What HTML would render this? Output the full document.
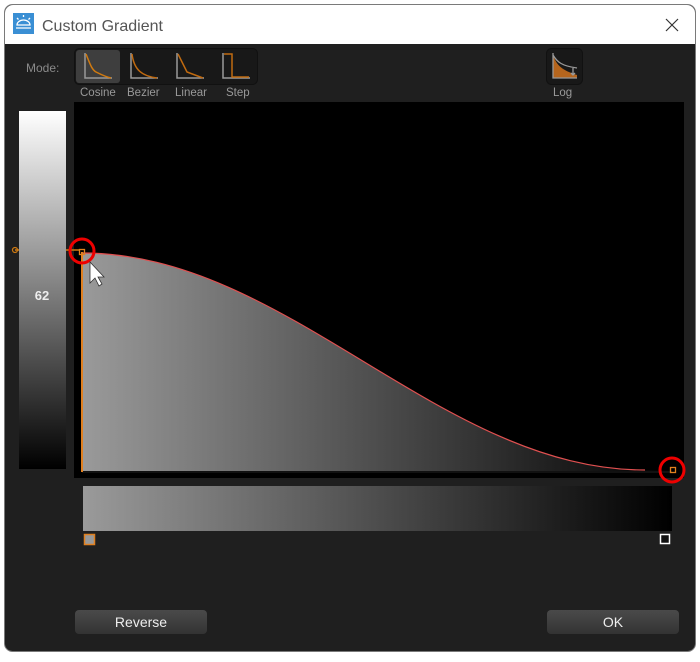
<!DOCTYPE html>
<html><head><style>
body{margin:0;background:#fff;width:700px;height:657px;overflow:hidden;font-family:"Liberation Sans",sans-serif}
</style></head><body>
<svg width="700" height="657" viewBox="0 0 700 657" xmlns="http://www.w3.org/2000/svg" font-family="Liberation Sans, sans-serif">
<defs>
<linearGradient id="h" x1="0" x2="1" y1="0" y2="0"><stop offset="0" stop-color="#9a9a9a"/><stop offset="1" stop-color="#000"/></linearGradient>
<linearGradient id="v" x1="0" x2="0" y1="0" y2="1"><stop offset="0" stop-color="#fff"/><stop offset="1" stop-color="#000"/></linearGradient>
<linearGradient id="btn" x1="0" x2="0" y1="0" y2="1"><stop offset="0" stop-color="#4a4a4a"/><stop offset="1" stop-color="#333"/></linearGradient>
</defs>
<rect x="4.5" y="4.5" width="691" height="647" rx="8" fill="#1f1f1f" stroke="#7a7a7a"/>
<path d="M5 44 V13 a8 8 0 0 1 8 -8 H687 a8 8 0 0 1 8 8 V44 Z" fill="#fff"/>
<rect x="13" y="13" width="21" height="21" fill="#3a8fd4"/>
<g stroke="#fff" stroke-width="1.3" fill="none"><path d="M17 25 a6.5 5 0 0 1 13 0 Z"/><path d="M23.5 15v2M17 18l1.5 1.5M30 18l-1.5 1.5M16 28h15"/></g>
<text x="42" y="31" font-size="16" fill="#555">Custom Gradient</text>
<path d="M666 19l12 12M678 19l-12 12" stroke="#333" stroke-width="1.2"/>
<text x="26" y="72" font-size="12" fill="#8a8a8a">Mode:</text>
<rect x="74.5" y="48.5" width="183" height="36" rx="5" fill="#181818" stroke="#111"/>
<rect x="76" y="50" width="44" height="33" rx="3" fill="#3e3e3e"/>
<g fill="none" stroke-width="1.5">
<path d="M85 53V78H112" stroke="#999"/><path d="M86 54 C90 64 92 70 96 72 C102 75 106 77 111 78" stroke="#d07a10"/>
<path d="M131 53V78H158" stroke="#999"/><path d="M132 54 C134 70 142 76 157 78" stroke="#c06a10"/>
<path d="M177 53V78H204" stroke="#999"/><path d="M178 54 L187 72 L203 78" stroke="#c06a10"/>
<path d="M223 53V78H250" stroke="#999"/><path d="M224 54 H232 V77 H249" stroke="#c06a10"/>
</g>
<text x="80" y="96" font-size="11.5" fill="#999">Cosine</text>
<text x="127" y="96" font-size="11.5" fill="#999">Bezier</text>
<text x="175" y="96" font-size="11.5" fill="#999">Linear</text>
<text x="226" y="96" font-size="11.5" fill="#999">Step</text>
<rect x="546.5" y="48.5" width="36" height="36" rx="5" fill="#181818" stroke="#111"/>
<path d="M553 55 C557 66 562 70 577 75 V78 H553 Z" fill="#b5651d"/>
<path d="M553 53V78H577M553 55 C557 62 562 66 577 68M573 68v7m-2 -2l2 2l2 -2" stroke="#999" fill="none" stroke-width="1.3"/>
<text x="553" y="96" font-size="11.5" fill="#999">Log</text>
<rect x="74" y="102" width="610" height="376" fill="#000"/>
<path d="M82 253 C287 253 440 470 645 470 H672 V471 H82 Z" fill="url(#h)"/>
<path d="M82 253 C287 253 440 470 645 470" fill="none" stroke="#e05050" stroke-width="1.2"/>
<rect x="82" y="471" width="590" height="2" fill="#111"/>
<line x1="82" y1="252" x2="82" y2="472" stroke="#e08020" stroke-width="2"/>
<line x1="15" y1="250" x2="80" y2="250" stroke="#d07a10" stroke-width="1.5"/>
<circle cx="15" cy="250" r="2.5" fill="none" stroke="#d07a10" stroke-width="1.2"/>
<rect x="19" y="111" width="47" height="358" fill="url(#v)"/>
<text x="42" y="300" font-size="13" font-weight="bold" fill="#eee" text-anchor="middle">62</text>
<rect x="79.5" y="249.5" width="5" height="5" fill="none" stroke="#e08020" stroke-width="1.3"/>
<circle cx="82" cy="251" r="12" fill="none" stroke="#e00" stroke-width="3"/>
<path d="M90 262 V283 L95 278 L99 286 L102 284 L98 277 L104 277 Z" fill="#fff" stroke="#333" stroke-width="0.8"/>
<rect x="670.5" y="467.5" width="5" height="5" fill="none" stroke="#e08020" stroke-width="1.3"/>
<circle cx="672" cy="470" r="12" fill="none" stroke="#e00" stroke-width="3"/>
<rect x="83" y="486" width="589" height="45" fill="url(#h)"/>
<rect x="84.5" y="534.5" width="10" height="10" fill="#999" stroke="#e08020" stroke-width="1.5"/>
<rect x="660.5" y="534.5" width="9" height="9" fill="#111" stroke="#fff" stroke-width="1.5"/>
<rect x="75" y="610" width="132" height="24" rx="4" fill="url(#btn)"/>
<text x="141" y="627" font-size="14" fill="#eee" text-anchor="middle">Reverse</text>
<rect x="547" y="610" width="132" height="24" rx="4" fill="url(#btn)"/>
<text x="613" y="627" font-size="14" fill="#eee" text-anchor="middle">OK</text>
</svg>
</body></html>
